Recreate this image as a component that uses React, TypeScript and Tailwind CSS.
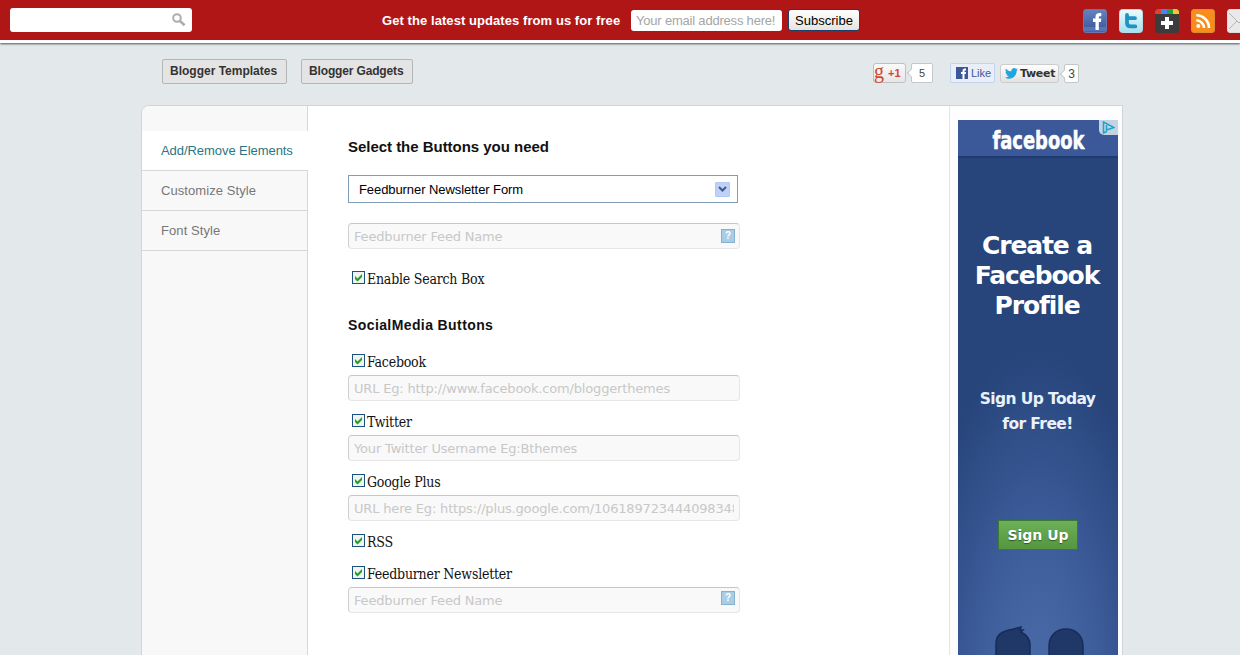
import type { ReactNode } from "react";

const tabs = ["Add/Remove Elements", "Customize Style", "Font Style"];

function SearchIcon() {
  return (
    <svg width="14" height="14" viewBox="0 0 14 14" fill="none" stroke="#adadad">
      <circle cx="5" cy="5" r="3.8" strokeWidth="2" />
      <path d="M8 8l4.6 4.2" strokeWidth="2.6" />
    </svg>
  );
}

function FacebookIcon() {
  return (
    <svg width="24" height="24" viewBox="0 0 24 24">
      <defs>
        <linearGradient id="fb" x1="0" y1="0" x2="0" y2="1">
          <stop offset="0" stopColor="#6484bd" />
          <stop offset="1" stopColor="#37549a" />
        </linearGradient>
      </defs>
      <rect x="0.5" y="0.5" width="23" height="23" rx="2.5" fill="url(#fb)" stroke="#6b76ae" />
      <path d="M1 18h22v4.5H1z" fill="#5f80bd" opacity=".7" />
      <path
        d="M12.500 21v-8H10V9.500h2.500V8c0-3 1.500-4 4.200-4h1.600v3.300H17c-.9 0-1.200.4-1.200 1.300v.9h2.500l-.4 3.500h-2.100v8z"
        fill="#fff"
      />
    </svg>
  );
}

function TwitterIcon() {
  return (
    <svg width="24" height="24" viewBox="0 0 24 24">
      <defs>
        <linearGradient id="tw" x1="0" y1="0" x2="0" y2="1">
          <stop offset="0" stopColor="#f0fbfd" />
          <stop offset="1" stopColor="#a5dfee" />
        </linearGradient>
      </defs>
      <rect x="0.5" y="0.5" width="23" height="23" rx="3" fill="url(#tw)" stroke="#b5dbe8" />
      <path
        d="M8 6v7.700c0 2.400 1.300 3.700 3.600 3.700h4.700M8 9.200h8"
        fill="none"
        stroke="#1d94c4"
        strokeWidth="3.800"
        strokeLinecap="round"
        strokeLinejoin="round"
      />
    </svg>
  );
}

function PlusIcon() {
  return (
    <svg width="24" height="24" viewBox="0 0 24 24">
      <rect width="24" height="24" rx="2.500" fill="#3c3c3c" />
      <path d="M2 0h4v5H0V2z" fill="#d94234" />
      <path d="M6 0h6v5H6z" fill="#4586ee" />
      <path d="M12 0h6v5h-6z" fill="#22a245" />
      <path d="M18 0h4l2 2v3h-6z" fill="#f6c62c" />
      <path d="M12 8v12M6 14h12" stroke="#fff" strokeWidth="4" />
    </svg>
  );
}

function RssIcon() {
  return (
    <svg width="24" height="24" viewBox="0 0 24 24">
      <rect x="0.5" y="0.5" width="23" height="23" rx="2.5" fill="#f88d1c" stroke="#e08a2e" />
      <circle cx="7.300" cy="17" r="2" fill="#fff" />
      <path
        d="M5.300 11.300a7.700 7.700 0 0 1 7.700 7.700M5.300 6.300A12.700 12.700 0 0 1 18 19"
        fill="none"
        stroke="#fff"
        strokeWidth="2.600"
      />
    </svg>
  );
}

function MailIcon() {
  return (
    <svg width="24" height="24" viewBox="0 0 24 24">
      <rect x="0.5" y="0.5" width="23" height="23" rx="2.500" fill="#e9e9e9" stroke="#dcdcdc" />
      <path d="M2 4l10 10 10-10M2 20l8-8M22 20l-8-8" fill="none" stroke="#b4b4b4" />
    </svg>
  );
}

function BirdIcon() {
  return (
    <svg width="13" height="11" viewBox="0 0 24 20" fill="#1fa6dd">
      <path d="M24 2.400a9.800 9.800 0 0 1-2.800.8A4.900 4.900 0 0 0 23.300.4a9.900 9.900 0 0 1-3.100 1.200 4.900 4.900 0 0 0-8.400 4.500A14 14 0 0 1 1.700 1a4.900 4.900 0 0 0 1.500 6.500A4.900 4.900 0 0 1 1 6.900a4.900 4.900 0 0 0 3.900 4.900 4.900 4.900 0 0 1-2.200.1 4.900 4.900 0 0 0 4.600 3.400A9.900 9.900 0 0 1 0 17.300a13.900 13.900 0 0 0 7.500 2.200c9.100 0 14.300-7.700 14-14.600A10 10 0 0 0 24 2.400z" />
    </svg>
  );
}

function NavButton({ children, className }: { children: ReactNode; className: string }) {
  return (
    <button
      className={`h-[25px] rounded-[2px] border border-[#b3b5b7] bg-[#e4e4e4] pl-[7px] text-left text-[12px] leading-[23px] font-bold whitespace-nowrap text-[#333] ${className}`}
    >
      {children}
    </button>
  );
}

function Bubble({ children, className }: { children: ReactNode; className: string }) {
  return (
    <div
      className={`relative flex items-center justify-center rounded-[2px] border border-[#c4c7c9] bg-white text-[#444] ${className}`}
    >
      <span className="absolute top-[6px] -left-[4px] size-[6px] rotate-45 border-b border-l border-[#c4c7c9] bg-white" />
      {children}
    </div>
  );
}

function Field({ placeholder, help }: { placeholder: string; help?: string }) {
  return (
    <div className="relative h-[26px] w-[392px]">
      <input
        placeholder={placeholder}
        className="block h-[26px] w-full rounded-[4px] border border-[#e6e6e6] border-t-[#c6c6c6] border-l-[#cfcfcf] bg-[#f9f9f9] px-[5px] font-['DejaVu_Sans',sans-serif] text-[13px] tracking-[-0.17px] placeholder:text-[#c8c8c8] focus:outline-none"
      />
      {help && (
        <span
          className={`absolute right-[5px] flex size-[14px] items-center justify-center border border-[#82b2d0] bg-[#a8cde4] text-[10px] leading-none font-bold text-white ${help}`}
        >
          ?
        </span>
      )}
    </div>
  );
}

function Check({ label }: { label: string }) {
  return (
    <label className="flex h-[26px] items-center gap-[2px] pl-[4px] font-['DejaVu_Serif_Condensed','DejaVu_Serif',serif] text-[14px] tracking-[-0.22px] whitespace-nowrap text-[#111]">
      <svg width="13" height="13" viewBox="0 0 13 13" className="-mt-[3px] shrink-0">
        <rect x="0.5" y="0.5" width="12" height="12" fill="#f1f3f0" stroke="#1d5180" />
        <path d="M3 5v3l2.500 2.500L10 6V3L5.500 7.500z" fill="#21a121" />
      </svg>
      <span>{label}</span>
    </label>
  );
}

function TopBar() {
  return (
    <header className="relative flex h-[43px] items-start overflow-hidden border-b-[3px] border-white bg-[#b11616] shadow-[0_1px_2px_#555]">
      <div className="mt-[8px] ml-[10px] flex h-[24px] w-[182px] shrink-0 items-center justify-end rounded-[3px] bg-white pr-[6px]">
        <SearchIcon />
      </div>
      <div className="ml-[190px] flex h-[40px] shrink-0 items-center">
        <span className="w-[249px] pt-[2px] text-[13px] font-bold tracking-[0.07px] whitespace-nowrap text-white">
          Get the latest updates from us for free
        </span>
        <input
          placeholder="Your email address here!"
          className="h-[21px] w-[151px] rounded-[3px] bg-white px-[5px] text-[13px] tracking-[-0.2px] placeholder:text-[#a5a5a5]"
        />
        <button className="ml-[6px] h-[22px] w-[72px] rounded-[3px] border border-[#1d3f6e] bg-linear-to-b from-white to-[#e6e4dc] text-[13px] leading-[21px] text-black">
          Subscribe
        </button>
      </div>
      <div className="mt-[9px] ml-[223px] flex shrink-0 gap-[12px]">
        <FacebookIcon />
        <TwitterIcon />
        <PlusIcon />
        <RssIcon />
        <MailIcon />
      </div>
    </header>
  );
}

function ShareButtons() {
  return (
    <div className="flex items-start pt-[4px]">
      <div className="flex h-[20px] w-[33px] items-center rounded-[3px] border border-[#c0c0c0] bg-linear-to-b from-[#fafafa] to-[#e6e6e6] text-[#d0492f]">
        <span className="-mt-[5px] w-[14px] font-['Liberation_Serif',serif] text-[20px] leading-[18px]">
          g
        </span>
        <span className="text-[11px] font-bold">+1</span>
      </div>
      <Bubble className="ml-[5px] h-[20px] w-[22px] text-[11px]">5</Bubble>
      <div className="ml-[17px] flex h-[20px] w-[45px] items-center gap-[3px] rounded-[2px] border border-[#c3d3ea] bg-[#e9eef7] pl-[5px] text-[11px] text-[#3b5998]">
        <svg width="12" height="12" viewBox="0 0 12 12">
          <rect width="12" height="12" fill="#3b5998" />
          <path
            d="M6.500 12V7H5V5h1.500V4c0-1.600.8-2.500 2.300-2.500H10v1.900h-.8c-.5 0-.7.2-.7.700V5H10l-.2 2H8.500v5z"
            fill="#fff"
          />
        </svg>
        <span className="pt-px">Like</span>
      </div>
      <div className="mt-px ml-[5px] flex h-[19px] w-[59px] items-center gap-[2px] rounded-[3px] border border-[#ccc] bg-linear-to-b from-white to-[#e2e2e2] pl-[4px] font-['DejaVu_Sans',sans-serif] text-[11px] font-bold tracking-[-0.3px] text-[#333]">
        <BirdIcon />
        <span className="pt-[2px]">Tweet</span>
      </div>
      <Bubble className="mt-px ml-[5px] h-[19px] w-[15px] text-[12px]">3</Bubble>
    </div>
  );
}

function Sidebar() {
  return (
    <nav className="flex w-[166px] shrink-0 flex-col rounded-tl-[8px] bg-[#f8f8f8] text-[13px]">
      <div className="h-[25px] border-r border-[#d5d7d8]" />
      {tabs.map((tab, i) => (
        <a
          key={tab}
          className={
            i === 0
              ? "flex h-[40px] items-center border-b border-[#d5d7d8] bg-white pl-[19px] tracking-[-0.06px] whitespace-nowrap text-[#2a7685]"
              : "flex h-[40px] items-center border-r border-b border-[#d5d7d8] pl-[19px] tracking-[0.08px] text-[#777]"
          }
        >
          {tab}
        </a>
      ))}
      <div className="grow border-r border-[#d5d7d8]" />
    </nav>
  );
}

function FormPanel() {
  return (
    <main className="w-[641px] shrink-0 pt-[31px] pl-[40px]">
      <h2 className="text-[15px] leading-[20px] font-bold tracking-[-0.03px] text-[#111]">
        Select the Buttons you need
      </h2>
      <button className="mt-[18px] flex h-[28px] w-[390px] items-center justify-between border border-[#7f9db9] bg-white pr-[7px] pl-[10px] text-[13px] tracking-[-0.08px] text-black">
        <span className="pt-px">Feedburner Newsletter Form</span>
        <span className="flex size-[15px] items-center justify-center rounded-[1px] border border-[#b4c8f6] bg-[#bfd1f8]">
          <svg width="9" height="6" viewBox="0 0 9 6" fill="none" stroke="#3d5a8c" strokeWidth="2">
            <path d="M1 1l3.500 3.500L8 1" />
          </svg>
        </span>
      </button>
      <div className="mt-[20px]">
        <Field placeholder="Feedburner Feed Name" help="top-[6px]" />
      </div>
      <div className="mt-[17px]">
        <Check label="Enable Search Box" />
      </div>
      <h2 className="mt-[23px] text-[14px] leading-[20px] font-bold tracking-[0.4px] text-[#111]">
        SocialMedia Buttons
      </h2>
      <div className="mt-[14px] flex flex-col gap-[8px]">
        <div>
          <Check label="Facebook" />
          <Field placeholder="URL Eg: http://www.facebook.com/bloggerthemes" />
        </div>
        <div>
          <Check label="Twitter" />
          <Field placeholder="Your Twitter Username Eg:Bthemes" />
        </div>
        <div>
          <Check label="Google Plus" />
          <Field placeholder="URL here Eg: https://plus.google.com/106189723444098348" />
        </div>
        <Check label="RSS" />
        <div className="-mt-[2px]">
          <Check label="Feedburner Newsletter" />
          <Field placeholder="Feedburner Feed Name" help="top-[4px]" />
        </div>
      </div>
    </main>
  );
}

function FacebookAd() {
  return (
    <div className="relative flex h-[600px] w-[160px] flex-col items-center bg-[#27457b] bg-[radial-gradient(ellipse_130px_350px_at_50%_580px,#4c6dab_0%,#3c5b99_50%,#27457b_100%)] text-center text-white">
      <div className="h-[38px] w-full border-b-2 border-[#1f3a70] bg-[#3b5998] font-['DejaVu_Sans_Condensed','DejaVu_Sans',sans-serif] text-[24px] leading-[43px] font-bold">
        <span className="inline-block scale-x-[0.83] [-webkit-text-stroke:0.5px_white]">facebook</span>
      </div>
      <div className="absolute top-0 right-0 flex h-[15px] w-[19px] items-center justify-center rounded-bl-[5px] bg-[#c3d3e4]">
        <svg width="13" height="13" viewBox="0 0 13 13" fill="none" stroke="#1ba5c6" strokeWidth="1.500">
          <path d="M4.500 4v5L12 6.500 1.500 1v11L5 10.500" />
        </svg>
      </div>
      <div className="mt-[73px] pr-[2px] font-['DejaVu_Sans',sans-serif] text-[25px] leading-[30px] font-bold tracking-[-1.1px]">
        <div>Create a</div>
        <div>Facebook</div>
        <div>Profile</div>
      </div>
      <div className="mt-[66px] pr-px font-['DejaVu_Sans',sans-serif] text-[15.500px] leading-[25px] font-bold tracking-[-0.6px] text-[#e9f1fb]">
        <div>Sign Up Today</div>
        <div>for Free!</div>
      </div>
      <button className="mt-[83px] h-[30px] w-[80px] border border-[#3b7a35] bg-linear-to-b from-[#6cb058] to-[#55963f] font-['DejaVu_Sans',sans-serif] text-[14px] leading-[28px] font-bold text-shadow-[0_1px_1px_#2c5c26]">
        Sign Up
      </button>
      <svg width="160" height="60" viewBox="0 0 160 60" className="mt-[74px]">
        <g fill="#1f3868" stroke="#172d59" strokeWidth="1.500">
          <path d="M38 60V20c0-9 5-12 13-14 5-1 8-2 12-3l-1 3h3l-2 2c6 3 9 7 9 13v39z" />
          <path d="M91 60V22c0-10 7-17 17-17s17 7 17 17v38z" />
        </g>
      </svg>
    </div>
  );
}

export default function App() {
  return (
    <div className="h-[655px] w-[1240px] overflow-hidden bg-[#e3e8ea] font-['Liberation_Sans',Arial,sans-serif]">
      <TopBar />
      <div className="ml-[162px] flex h-[62px] w-[917px] items-start pt-[16px]">
        <div className="flex gap-[14px]">
          <NavButton className="w-[125px]">Blogger Templates</NavButton>
          <NavButton className="w-[112px] tracking-[-0.15px]">Blogger Gadgets</NavButton>
        </div>
        <div className="ml-auto">
          <ShareButtons />
        </div>
      </div>
      <div className="ml-[141px] flex h-[620px] w-[982px] rounded-tl-[8px] border border-[#cfd5d8] bg-white">
        <Sidebar />
        <FormPanel />
        <aside className="grow border-l border-[#e4e6e6] bg-[#fdfdfd] pt-[14px] pl-[8px]">
          <FacebookAd />
        </aside>
      </div>
    </div>
  );
}
